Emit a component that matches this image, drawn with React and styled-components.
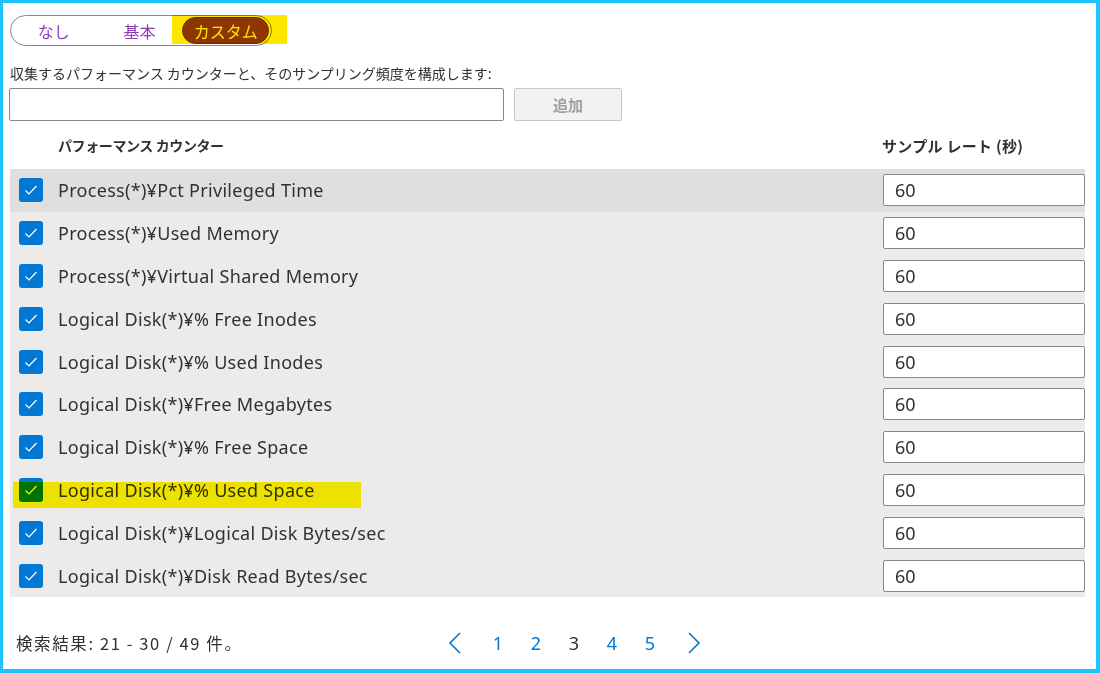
import React from 'react';
import styled, { createGlobalStyle } from 'styled-components';

const GlobalStyle = createGlobalStyle`
  html, body {
    margin: 0;
    padding: 0;
    background: #ffffff;
  }
  body {
    font-family: "Noto Sans CJK JP", "Noto Sans", sans-serif;
    color: #323130;
  }
`;

const Frame = styled.div`
  box-sizing: border-box;
  width: 1100px;
  height: 673px;
  border-style: solid;
  border-color: #1ec3ff;
  border-width: 3px 4px 4px 3px;
  padding: 12px 11px 0 7px;
  display: flex;
  flex-direction: column;
  overflow: hidden;
`;

const ToggleWrap = styled.div`
  position: relative;
  width: 262px;
  height: 31px;
`;

const Toggle = styled.div`
  box-sizing: border-box;
  display: flex;
  align-items: center;
  width: 262px;
  height: 31px;
  border: 1px solid #8a8886;
  border-radius: 16px;
  padding: 0 2px 0 0;
`;

const ToggleOption = styled.div`
  box-sizing: border-box;
  height: ${p => (p.$active ? '27px' : '29px')};
  width: ${p => (p.$active ? '87px' : '86px')};
  display: flex;
  align-items: center;
  justify-content: center;
  font-size: 16px;
  border-radius: 14px;
  color: ${p => (p.$active ? '#ffffff' : '#8e3bb8')};
  background: ${p => (p.$active ? '#8e3bb8' : 'transparent')};
  border: ${p => (p.$active ? '1px solid #6b2a8c' : 'none')};
`;

const Marker = styled.div`
  position: absolute;
  pointer-events: none;
  mix-blend-mode: multiply;
  background: ${p => p.$color || '#ffe800'};
  left: ${p => p.$left}px;
  top: ${p => p.$top}px;
  width: ${p => p.$width}px;
  height: ${p => p.$height}px;
`;

const Label = styled.div`
  margin-top: 17px;
  font-size: 14px;
  line-height: 20px;
  color: #323130;
`;

const AddRow = styled.div`
  display: flex;
  gap: 10px;
  margin-top: 5px;
  margin-left: -1px;
`;

const TextInput = styled.div`
  box-sizing: border-box;
  width: 495px;
  height: 33px;
  border: 1px solid #8a8886;
  border-radius: 2px;
  background: #fff;
`;

const AddButton = styled.div`
  box-sizing: border-box;
  width: 108px;
  height: 33px;
  border: 1px solid #c8c6c4;
  border-radius: 2px;
  background: #f3f2f1;
  color: #a19f9d;
  font-weight: 700;
  font-size: 15px;
  display: flex;
  align-items: center;
  justify-content: center;
`;

const HeaderRow = styled.div`
  display: flex;
  align-items: center;
  height: 48px;
  font-weight: 700;
  font-size: 14px;
  color: #323130;
`;

const HeadCell = styled.div`
  width: ${p => p.$width || 'auto'};
  padding-left: ${p => p.$pad || 0}px;
  flex: ${p => (p.$grow ? 1 : 'none')};
  font-size: ${p => p.$size || 14}px;
  letter-spacing: ${p => p.$spacing || 0}px;
`;

const Table = styled.div`
  position: relative;
  display: flex;
  flex-direction: column;
`;

const Row = styled.div`
  display: flex;
  align-items: center;
  height: 42.8px;
  background: ${p => (p.$hover ? '#e1dfdd' : '#edebe9')};
`;

const Check = styled.div`
  box-sizing: border-box;
  width: 24px;
  height: 24px;
  margin-left: 9px;
  margin-right: 15px;
  border-radius: 3px;
  background: #0078d4;
  display: flex;
  align-items: center;
  justify-content: center;
  flex: none;
`;

const Name = styled.div`
  flex: 1;
  font-family: "Noto Sans", sans-serif;
  font-size: 18px;
  letter-spacing: 0.3px;
  color: #323130;
  white-space: nowrap;
`;

const RateInput = styled.div`
  box-sizing: border-box;
  width: 202px;
  height: 32px;
  border: 1px solid #8a8886;
  border-radius: 2px;
  background: #ffffff;
  padding-left: 11px;
  font-family: "Noto Sans", sans-serif;
  font-size: 18px;
  line-height: 30px;
  color: #323130;
`;

const Footer = styled.div`
  display: flex;
  align-items: center;
  margin-top: 30px;
  height: 32px;
  padding-left: 6px;
`;

const Summary = styled.div`
  width: 420px;
  font-size: 16.5px;
  letter-spacing: 1.6px;
  color: #323130;
`;

const Pager = styled.div`
  display: flex;
  align-items: center;
`;

const PageItem = styled.div`
  width: 38px;
  text-align: center;
  font-family: "Noto Sans", sans-serif;
  font-size: 18px;
  color: ${p => (p.$current ? '#323130' : '#0078d4')};
`;

const Arrow = styled.div`
  width: 38px;
  display: flex;
  justify-content: center;
  margin: ${p => (p.$next ? '0 0 0 6px' : '0 5px 0 0')};
`;

const counters = [
  'Process(*)¥Pct Privileged Time',
  'Process(*)¥Used Memory',
  'Process(*)¥Virtual Shared Memory',
  'Logical Disk(*)¥% Free Inodes',
  'Logical Disk(*)¥% Used Inodes',
  'Logical Disk(*)¥Free Megabytes',
  'Logical Disk(*)¥% Free Space',
  'Logical Disk(*)¥% Used Space',
  'Logical Disk(*)¥Logical Disk Bytes/sec',
  'Logical Disk(*)¥Disk Read Bytes/sec',
];

const CheckMark = () => (
  <svg width="16" height="16" viewBox="0 0 16 16">
    <path d="M2.5 8.5 L6 12 L13.5 4" fill="none" stroke="#ffffff" strokeWidth="1.2" />
  </svg>
);

const Chevron = ({ dir }) => (
  <svg width="14" height="22" viewBox="0 0 14 22">
    <path
      d={dir === 'left' ? 'M12 1 L2 11 L12 21' : 'M2 1 L12 11 L2 21'}
      fill="none"
      stroke="#0078d4"
      strokeWidth="1.6"
    />
  </svg>
);

export default function App() {
  return (
    <Frame>
      <GlobalStyle />
      <ToggleWrap>
        <Toggle>
          <ToggleOption>なし</ToggleOption>
          <ToggleOption>基本</ToggleOption>
          <ToggleOption $active>カスタム</ToggleOption>
        </Toggle>
        <Marker $left={162} $top={0} $width={115} $height={29} $color="#ffe600" />
      </ToggleWrap>
      <Label>収集するパフォーマンス カウンターと、そのサンプリング頻度を構成します:</Label>
      <AddRow>
        <TextInput />
        <AddButton>追加</AddButton>
      </AddRow>
      <HeaderRow>
        <HeadCell $pad={48} $grow $spacing={-0.4}>パフォーマンス カウンター</HeadCell>
        <HeadCell $width="203px" $size={15} $spacing={0.3}>サンプル レート (秒)</HeadCell>
      </HeaderRow>
      <Table>
        {counters.map((c, i) => (
          <Row key={c} $hover={i === 0}>
            <Check>
              <CheckMark />
            </Check>
            <Name>{c}</Name>
            <RateInput>60</RateInput>
          </Row>
        ))}
        <Marker $left={3} $top={313} $width={348} $height={26} $color="#fff500" />
      </Table>
      <Footer>
        <Summary>検索結果: 21 - 30 / 49 件。</Summary>
        <Pager>
          <Arrow>
            <Chevron dir="left" />
          </Arrow>
          <PageItem>1</PageItem>
          <PageItem>2</PageItem>
          <PageItem $current>3</PageItem>
          <PageItem>4</PageItem>
          <PageItem>5</PageItem>
          <Arrow $next>
            <Chevron dir="right" />
          </Arrow>
        </Pager>
      </Footer>
    </Frame>
  );
}
